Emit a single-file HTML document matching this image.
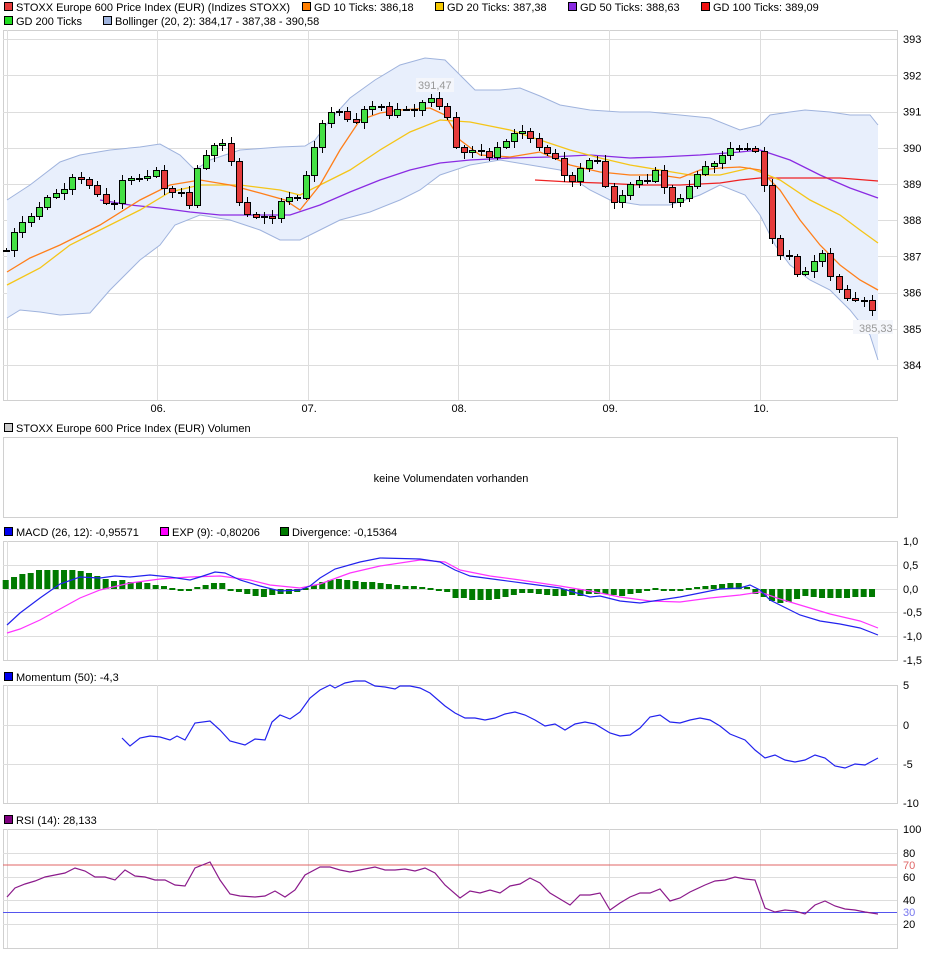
<!DOCTYPE html>
<html><head><meta charset="utf-8"><style>
body{margin:0;background:#fff;width:940px;height:958px;overflow:hidden;font-family:"Liberation Sans",sans-serif;}
svg{position:absolute;left:0;top:0}
text{font-family:"Liberation Sans",sans-serif;font-size:11px}
</style></head><body>
<svg id="s" width="940" height="958" xmlns="http://www.w3.org/2000/svg">
<g id="dyn"></g>
<g id="static">
<rect x="0" y="0" width="900" height="28" fill="#fff"/>
<rect x="4.5" y="2.5" width="8" height="8" fill="#e53b3b" stroke="#000"/><text x="16" y="11">STOXX Europe 600 Price Index (EUR) (Indizes STOXX)</text>
<rect x="302.5" y="2.5" width="8" height="8" fill="#ff7f00" stroke="#000"/><text x="314" y="11">GD 10 Ticks: 386,18</text>
<rect x="435.5" y="2.5" width="8" height="8" fill="#f5c800" stroke="#000"/><text x="447" y="11">GD 20 Ticks: 387,38</text>
<rect x="568.5" y="2.5" width="8" height="8" fill="#8a2be2" stroke="#000"/><text x="580" y="11">GD 50 Ticks: 388,63</text>
<rect x="701.5" y="2.5" width="8" height="8" fill="#ee1111" stroke="#000"/><text x="713" y="11">GD 100 Ticks: 389,09</text>
<rect x="4.5" y="16.5" width="8" height="8" fill="#22dd22" stroke="#000"/><text x="16" y="25">GD 200 Ticks</text>
<rect x="103.5" y="16.5" width="8" height="8" fill="#9fb3dd" stroke="#000"/><text x="115" y="25">Bollinger (20, 2): 384,17 - 387,38 - 390,58</text>
</g>
</svg>
<script>
var NS="http://www.w3.org/2000/svg",g=document.getElementById("dyn");
function el(t,a,s){var e=document.createElementNS(NS,t);for(var k in a)e.setAttribute(k,a[k]);if(s!=null)e.textContent=s;g.appendChild(e);return e;}
function line(x1,y1,x2,y2,c,w){el("line",{x1:x1,y1:y1,x2:x2,y2:y2,stroke:c,"stroke-width":w||1});}
function pl(p,c,w){el("polyline",{points:p.map(function(a){return a.join(",")}).join(" "),fill:"none",stroke:c,"stroke-width":w||1});}
function txt(x,y,s,o){var a={x:x,y:y,fill:"#000"};for(var k in o)a[k]=o[k];el("text",a,s);}
var VX=[157.5,308.5,458.5,609.5,760.5];
function panel(y0,y1,hy,labels){
 el("rect",{x:3.5,y:y0+.5,width:894,height:y1-y0,fill:"#fff",stroke:"#d0d0d0"});
 line(7.5,y0,7.5,y1,"#ddd");
 VX.forEach(function(x){line(x,y0,x,y1,"#ddd")});
 (hy||[]).forEach(function(y){line(3,y+.5,897,y+.5,"#ddd")});
 (labels||[]).forEach(function(l){txt(903,l[0]+4,l[1],l[2]?{fill:l[2]}:{})});
}
(function(){
var py=function(v){return 365-(v-384)*36.2};
var hl=[],lb=[];for(var v=384;v<=393;v++){hl.push(Math.round(py(v)));lb.push([py(v),""+v]);}
panel(30,400,hl,lb);
VX.forEach(function(x,i){txt(x-7,412,["06.","07.","08.","09.","10."][i])});
var up=[[7,200],[30,185],[60,162],[80,155],[110,150],[140,147],[160,144],[180,155],[195,170],[210,160],[240,150],[280,147],[305,146],[315,140],[330,120],[350,98],[375,80],[400,65],[425,58],[445,60],[460,75],[475,90],[500,90],[520,88],[540,96],[560,105],[590,110],[620,112],[650,112],[680,115],[710,118],[740,130],[760,125],[770,115],[790,112],[805,110],[830,112],[850,115],[870,115],[878,125]];
var lo=[[7,318],[20,310],[40,312],[60,315],[90,313],[110,290],[140,260],[160,245],[175,225],[200,215],[230,220],[260,230],[280,240],[300,240],[320,230],[340,220],[370,212],[400,200],[420,190],[440,175],[455,170],[470,165],[500,160],[530,165],[560,170],[590,190],[610,200],[640,205],[670,205],[700,195],[720,185],[745,195],[760,215],[775,245],[790,265],[810,280],[830,290],[850,310],[870,335],[878,360]];
el("polygon",{points:up.concat(lo.slice().reverse()).map(function(a){return a.join(",")}).join(" "),fill:"#e8effc",stroke:"none"});
pl(up,"#9fb3dd");pl(lo,"#9fb3dd");
pl([[100,200],[130,205],[160,208],[190,212],[220,215],[250,215],[290,215],[320,205],[350,192],[380,180],[410,170],[440,163],[470,160],[510,158],[550,157],[590,155],[630,158],[660,157],[700,155],[740,152],[760,150],[790,160],[820,175],[850,188],[878,198]],"#8a2be2",1.3);
pl([[535,180],[570,182],[600,183],[640,185],[680,185],[720,183],[740,180],[760,178],[800,178],[840,178],[878,181]],"#ee2222",1.3);
pl([[7,285],[40,268],[70,245],[100,230],[140,210],[170,192],[200,185],[240,185],[280,190],[300,195],[320,185],[350,170],[380,150],[410,132],[440,120],[470,122],[510,130],[540,140],[570,150],[600,158],[630,165],[660,170],[690,175],[720,175],[750,168],[780,180],[810,200],[840,215],[860,230],[878,243]],"#f5c518",1.3);
pl([[7,272],[30,258],[60,245],[100,225],[140,200],[170,185],[200,180],[230,185],[260,193],[285,200],[300,210],[320,185],[340,150],[360,120],[380,113],[400,110],[430,108],[445,115],[460,140],[480,155],[510,157],[540,152],[570,165],[600,172],[630,175],[660,175],[680,178],[700,170],[720,168],[740,167],[760,170],[780,190],[800,220],[820,245],[840,265],[860,280],[878,290]],"#ff7f1a",1.3);
var cp=[[7,247],[14,232],[22,222],[29,217],[35,212],[41,205],[48,196],[55,193],[63,190],[73,176],[80,178],[90,186],[98,195],[106,203],[114,203],[122,180],[130,178],[138,178],[146,177],[156,170],[165,190],[173,192],[181,192],[189,205],[198,165],[206,155],[214,145],[225,143],[232,166],[240,208],[249,215],[257,217],[265,216],[273,218],[283,196],[292,198],[300,198],[308,165],[316,140],[324,118],[333,110],[342,111],[349,122],[356,122],[364,109],[372,106],[380,105],[389,115],[397,109],[406,109],[414,110],[423,101],[432,97],[441,109],[449,119],[458,158],[466,150],[474,150],[484,152],[491,159],[500,142],[508,140],[516,131],[524,131],[533,141],[542,150],[551,156],[559,160],[567,185],[576,178],[584,160],[592,160],[601,161],[609,205],[617,200],[625,192],[633,180],[641,180],[649,181],[658,165],[667,200],[676,203],[683,195],[691,183],[700,170],[709,163],[716,163],[724,153],[731,148],[739,148],[747,148],[759,152],[767,208],[776,262],[784,250],[792,260],[800,282],[808,265],[816,260],[825,250],[833,288],[841,290],[849,300],[858,300],[866,300],[872,310],[878,316]];
function interp(arr,x){for(var i=0;i<arr.length-1;i++){if(x<=arr[i+1][0]){var a=arr[i],b=arr[i+1];return a[1]+(b[1]-a[1])*(x-a[0])/(b[0]-a[0]);}}return arr[arr.length-1][1];}
var prev=250;
for(var i=0;i<105;i++){var x=5.7+i*8.33;var c=Math.round(interp(cp,x));var o=prev;prev=c;
 var bt=Math.min(o,c),bb=Math.max(o,c);var h=Math.max(bb-bt,1);
 var wt=bt-2-(i*7%5),wb=bb+2+(i*11%6);
 var xi=Math.round(x)+.5;line(xi,wt,xi,wb,"#000");
 el("rect",{x:Math.round(x)-3+.5,y:bt+.5,width:6,height:h,fill:c<o?"#44e044":"#e53b3b",stroke:"#000"});}
el("rect",{x:416,y:78,width:38,height:14,fill:"#f4f6fb"});txt(418,89,"391,47",{fill:"#999"});
el("rect",{x:853,y:320,width:40,height:14,fill:"#f4f6fb"});txt(859,332,"385,33",{fill:"#999"});
el("rect",{x:4.5,y:423.5,width:8,height:8,fill:"#ccc",stroke:"#000"});txt(16,432,"STOXX Europe 600 Price Index (EUR) Volumen");
el("rect",{x:3.5,y:437.5,width:894,height:80,fill:"#fff",stroke:"#d0d0d0"});
txt(451,482,"keine Volumendaten vorhanden",{"text-anchor":"middle","font-size":"12px"});
el("rect",{x:4.5,y:527.5,width:8,height:8,fill:"#0000ee",stroke:"#000"});txt(16,536,"MACD (26, 12): -0,95571");
el("rect",{x:160.5,y:527.5,width:8,height:8,fill:"#ff00ff",stroke:"#000"});txt(172,536,"EXP (9): -0,80206");
el("rect",{x:280.5,y:527.5,width:8,height:8,fill:"#007a00",stroke:"#000"});txt(292,536,"Divergence: -0,15364");
panel(541,660,[565,589,612,636],[[541,"1,0"],[565,"0,5"],[589,"0,0"],[612,"-0,5"],[636,"-1,0"],[660,"-1,5"]]);
var hv=[9,12,15,16,19,19,19,19,19,18,16,13,10,8,9,7,7,6,4,3,1,-1,-2,2,4,6,6,-1,-3,-5,-7,-8,-6,-5,-5,-3,1,4,7,9,10,9,8,7,7,6,5,4,3,3,2,1,-1,-3,-9,-9,-11,-11,-11,-10,-8,-6,-4,-4,-5,-6,-7,-7,-6,-7,-5,-5,-5,-6,-7,-5,-4,-2,1,-2,-2,-1,1,2,3,4,5,6,6,2,-5,-8,-12,-14,-13,-10,-7,-8,-9,-9,-9,-9,-8,-8,-8];
hv.forEach(function(h,i){var x=5.7+i*8.33;var y=h>0?589-h:589;el("rect",{x:x-3,y:y,width:6,height:Math.max(Math.abs(h),2),fill:"#007a00"});});
pl([[7,633],[20,629],[40,620],[60,609],[80,598],[100,590],[130,583],[160,579],[190,577],[220,576],[250,580],[270,585],[300,588],[320,584],[350,573],[380,566],[420,560],[445,562],[460,570],[490,576],[520,580],[560,586],[590,591],[620,597],[650,601],[680,602],[710,598],[740,595],[760,592],[780,599],[800,605],[830,614],[860,621],[878,628]],"#ff33ff",1.2);
pl([[7,625],[20,613],[40,598],[60,584],[80,577],[100,578],[115,576],[130,577],[150,575],[170,577],[190,580],[200,577],[215,572],[225,573],[240,580],[260,586],[280,591],[300,590],[310,586],[320,578],[335,569],[360,562],[380,558],[420,559],[440,562],[455,570],[470,576],[500,580],[530,584],[560,588],[590,597],[600,596],[620,601],[640,603],[660,600],[680,597],[700,593],[720,589],[740,588],[750,585],[760,590],[770,600],[790,610],[800,615],[820,621],[840,624],[860,628],[878,635]],"#2222ee",1.2);
el("rect",{x:4.5,y:672.5,width:8,height:8,fill:"#0000ee",stroke:"#000"});txt(16,681,"Momentum (50): -4,3");
panel(685,803,[725,764],[[685,"5"],[725,"0"],[764,"-5"],[803,"-10"]]);
pl([[122,738],[130,746],[140,738],[150,736],[160,737],[170,740],[177,736],[185,740],[195,723],[210,721],[220,730],[230,741],[245,745],[255,739],[265,740],[272,722],[280,715],[290,719],[300,712],[310,698],[320,690],[330,685],[335,688],[345,683],[355,681],[365,681],[375,686],[385,687],[395,689],[400,686],[410,686],[420,688],[430,693],[445,706],[455,713],[465,718],[475,718],[485,720],[495,718],[505,714],[515,712],[525,715],[535,720],[545,726],[555,724],[565,730],[575,724],[585,722],[595,724],[610,733],[620,736],[630,735],[640,728],[650,717],[660,715],[670,722],[680,723],[690,720],[700,718],[710,720],[720,726],[730,734],[745,740],[755,750],[765,758],[775,755],[785,760],[795,762],[805,760],[815,755],[825,758],[835,766],[845,768],[855,764],[865,765],[878,758]],"#2222ee",1.2);
el("rect",{x:4.5,y:815.5,width:8,height:8,fill:"#800080",stroke:"#000"});txt(16,824,"RSI (14): 28,133");
panel(829,948,[853,877,900,924],[[829,"100"],[853,"80"],[877,"60"],[900,"40"],[924,"20"]]);
line(3,865,897,865,"#e06666");line(3,912.5,897,912.5,"#5555ee");
txt(903,869,"70",{fill:"#e06666"});txt(903,916,"30",{fill:"#7777ee"});
pl([[7,897],[15,888],[25,884],[35,881],[45,877],[55,875],[65,873],[75,868],[85,871],[95,877],[105,877],[115,880],[125,870],[135,876],[145,877],[155,880],[165,880],[175,885],[185,886],[195,868],[210,862],[220,880],[230,894],[240,896],[255,897],[265,896],[275,891],[285,897],[295,890],[305,875],[320,867],[330,867],[340,870],[350,872],[360,870],[375,867],[385,870],[395,870],[405,869],[415,871],[425,868],[435,873],[445,885],[460,898],[470,891],[480,893],[490,890],[500,893],[510,886],[520,884],[530,878],[540,883],[550,893],[560,899],[570,905],[580,895],[590,895],[600,893],[610,910],[620,903],[630,897],[640,893],[650,893],[660,889],[670,901],[680,898],[690,892],[705,885],[715,881],[725,880],[735,877],[745,879],[755,880],[765,908],[775,912],[785,910],[795,911],[805,914],[815,905],[825,901],[835,906],[845,909],[855,910],[865,912],[878,914]],"#8b1a8b",1.2);
})();
</script>
</body></html>
